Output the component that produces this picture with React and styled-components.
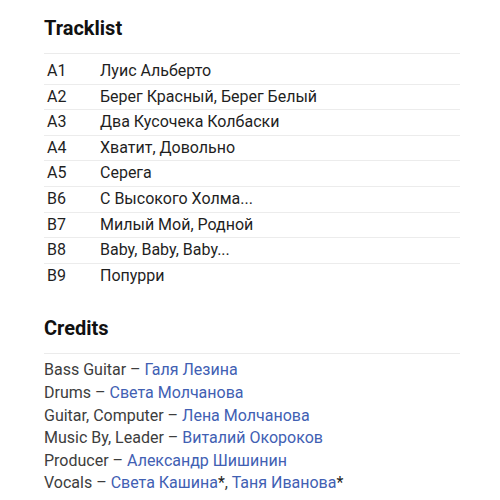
import React from "react";
import styled, { createGlobalStyle } from "styled-components";

const tracks = [
  ["A1", "Луис Альберто"],
  ["A2", "Берег Красный, Берег Белый"],
  ["A3", "Два Кусочека Колбаски"],
  ["A4", "Хватит, Довольно"],
  ["A5", "Серега"],
  ["B6", "С Высокого Холма..."],
  ["B7", "Милый Мой, Родной"],
  ["B8", "Baby, Baby, Baby..."],
  ["B9", "Попурри"],
];

const credits = [
  ["Bass Guitar", ["Галя Лезина"]],
  ["Drums", ["Света Молчанова"]],
  ["Guitar, Computer", ["Лена Молчанова"]],
  ["Music By, Leader", ["Виталий Окороков"]],
  ["Producer", ["Александр Шишинин"]],
  ["Vocals", ["Света Кашина*", "Таня Иванова*"]],
];

const GlobalStyle = createGlobalStyle`
  body {
    margin: 0;
    background: #fff;
    font-family: Roboto, "Liberation Sans", sans-serif;
  }
`;

const Page = styled.div`
  width: 416px;
  padding: 16px 0 0 44px;
`;

const Section = styled.section`
  margin-bottom: 28px;
`;

const Heading = styled.h2`
  margin: 0;
  font-size: 20px;
  line-height: 24px;
  font-weight: 700;
  color: #111;
  padding-bottom: 13px;
  border-bottom: 1px solid #ebebeb;
`;

const TrackList = styled.div`
  margin-top: 5px;
`;

const Row = styled.div`
  display: grid;
  grid-template-columns: 53px 1fr;
  padding-left: 3px;
  font-size: 16px;
  line-height: 24.6px;
  color: #1f1f1f;
  border-top: 1px solid #ececec;

  &:first-child {
    border-top: none;
  }
`;

const CreditList = styled.div`
  margin-top: 5px;
`;

const Credit = styled.div`
  font-size: 16px;
  line-height: 22.6px;
  color: #3d3d3d;
`;

const Artist = styled.a`
  color: #4160b3;
  text-decoration: none;
`;

const Star = styled.span`
  color: #222;
`;

const App = () => {
  return (
    <Page>
      <GlobalStyle />
      <Section>
        <Heading>Tracklist</Heading>
        <TrackList>
          {tracks.map(([pos, title]) => (
            <Row key={pos}>
              <span>{pos}</span>
              <span>{title}</span>
            </Row>
          ))}
        </TrackList>
      </Section>
      <Section>
        <Heading>Credits</Heading>
        <CreditList>
          {credits.map(([role, names]) => (
            <Credit key={role}>
              {role} –{" "}
              {names.map((n, i) => {
                const starred = n.endsWith("*");
                const name = starred ? n.slice(0, -1) : n;
                return (
                  <React.Fragment key={n}>
                    {i > 0 && ", "}
                    <Artist href="#">{name}</Artist>
                    {starred && <Star>*</Star>}
                  </React.Fragment>
                );
              })}
            </Credit>
          ))}
        </CreditList>
      </Section>
    </Page>
  );
};

export default App;
